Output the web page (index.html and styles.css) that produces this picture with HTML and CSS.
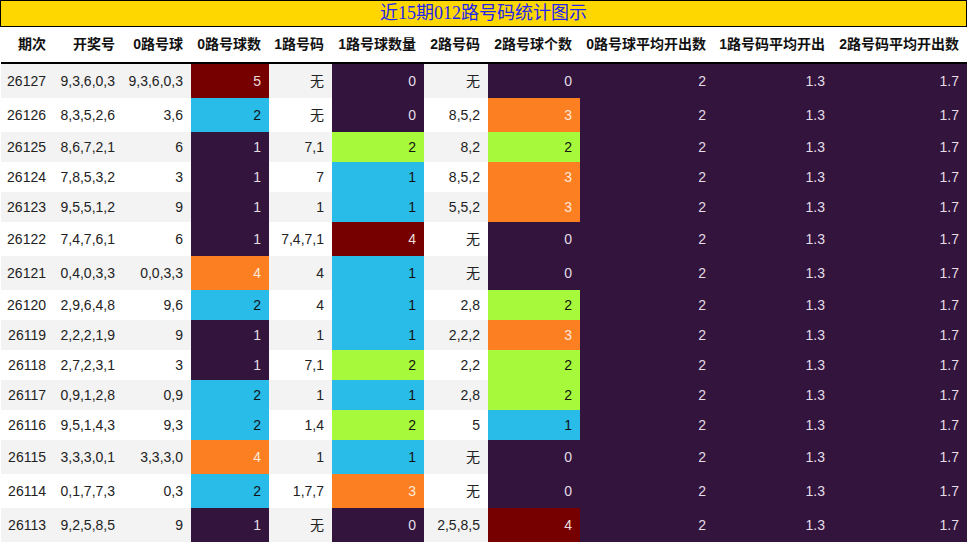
FILE: index.html
```html
<!DOCTYPE html>
<html>
<head>
<meta charset="utf-8">
<link rel="stylesheet" href="styles.css">
</head>
<body>
<div class="title">近15期012路号码统计图示</div>
<table class="stats">
<colgroup>
<col class="c1"><col class="c2"><col class="c3"><col class="c4"><col class="c5"><col class="c6"><col class="c7"><col class="c8"><col class="c9"><col class="c10"><col class="c11">
</colgroup>
<thead>
<tr><th>期次</th><th>开奖号</th><th>0路号球</th><th>0路号球数</th><th>1路号码</th><th>1路号球数量</th><th>2路号码</th><th>2路号球个数</th><th>0路号球平均开出数</th><th>1路号码平均开出</th><th>2路号码平均开出数</th></tr>
</thead>
<tbody>
<tr class="tall"><td>26127</td><td>9,3,6,0,3</td><td>9,3,6,0,3</td><td class="red">5</td><td>无</td><td class="pur">0</td><td>无</td><td class="pur">0</td><td class="pur">2</td><td class="pur">1.3</td><td class="pur">1.7</td></tr>
<tr class="tall"><td>26126</td><td>8,3,5,2,6</td><td>3,6</td><td class="cyan">2</td><td>无</td><td class="pur">0</td><td>8,5,2</td><td class="org">3</td><td class="pur">2</td><td class="pur">1.3</td><td class="pur">1.7</td></tr>
<tr><td>26125</td><td>8,6,7,2,1</td><td>6</td><td class="pur">1</td><td>7,1</td><td class="lime">2</td><td>8,2</td><td class="lime">2</td><td class="pur">2</td><td class="pur">1.3</td><td class="pur">1.7</td></tr>
<tr><td>26124</td><td>7,8,5,3,2</td><td>3</td><td class="pur">1</td><td>7</td><td class="cyan">1</td><td>8,5,2</td><td class="org">3</td><td class="pur">2</td><td class="pur">1.3</td><td class="pur">1.7</td></tr>
<tr><td>26123</td><td>9,5,5,1,2</td><td>9</td><td class="pur">1</td><td>1</td><td class="cyan">1</td><td>5,5,2</td><td class="org">3</td><td class="pur">2</td><td class="pur">1.3</td><td class="pur">1.7</td></tr>
<tr class="tall"><td>26122</td><td>7,4,7,6,1</td><td>6</td><td class="pur">1</td><td>7,4,7,1</td><td class="red">4</td><td>无</td><td class="pur">0</td><td class="pur">2</td><td class="pur">1.3</td><td class="pur">1.7</td></tr>
<tr class="tall"><td>26121</td><td>0,4,0,3,3</td><td>0,0,3,3</td><td class="org">4</td><td>4</td><td class="cyan">1</td><td>无</td><td class="pur">0</td><td class="pur">2</td><td class="pur">1.3</td><td class="pur">1.7</td></tr>
<tr><td>26120</td><td>2,9,6,4,8</td><td>9,6</td><td class="cyan">2</td><td>4</td><td class="cyan">1</td><td>2,8</td><td class="lime">2</td><td class="pur">2</td><td class="pur">1.3</td><td class="pur">1.7</td></tr>
<tr><td>26119</td><td>2,2,2,1,9</td><td>9</td><td class="pur">1</td><td>1</td><td class="cyan">1</td><td>2,2,2</td><td class="org">3</td><td class="pur">2</td><td class="pur">1.3</td><td class="pur">1.7</td></tr>
<tr><td>26118</td><td>2,7,2,3,1</td><td>3</td><td class="pur">1</td><td>7,1</td><td class="lime">2</td><td>2,2</td><td class="lime">2</td><td class="pur">2</td><td class="pur">1.3</td><td class="pur">1.7</td></tr>
<tr><td>26117</td><td>0,9,1,2,8</td><td>0,9</td><td class="cyan">2</td><td>1</td><td class="cyan">1</td><td>2,8</td><td class="lime">2</td><td class="pur">2</td><td class="pur">1.3</td><td class="pur">1.7</td></tr>
<tr><td>26116</td><td>9,5,1,4,3</td><td>9,3</td><td class="cyan">2</td><td>1,4</td><td class="lime">2</td><td>5</td><td class="cyan">1</td><td class="pur">2</td><td class="pur">1.3</td><td class="pur">1.7</td></tr>
<tr class="tall"><td>26115</td><td>3,3,3,0,1</td><td>3,3,3,0</td><td class="org">4</td><td>1</td><td class="cyan">1</td><td>无</td><td class="pur">0</td><td class="pur">2</td><td class="pur">1.3</td><td class="pur">1.7</td></tr>
<tr class="tall"><td>26114</td><td>0,1,7,7,3</td><td>0,3</td><td class="cyan">2</td><td>1,7,7</td><td class="org">3</td><td>无</td><td class="pur">0</td><td class="pur">2</td><td class="pur">1.3</td><td class="pur">1.7</td></tr>
<tr class="tall"><td>26113</td><td>9,2,5,8,5</td><td>9</td><td class="pur">1</td><td>无</td><td class="pur">0</td><td>2,5,8,5</td><td class="red">4</td><td class="pur">2</td><td class="pur">1.3</td><td class="pur">1.7</td></tr>
</tbody>
</table>
</body>
</html>
```
FILE: styles.css
```css
html, body {
  margin: 0;
  padding: 0;
  background: #ffffff;
}
body {
  font-family: "Liberation Sans", "Noto Sans CJK SC", sans-serif;
  font-size: 14px;
  color: #222222;
}
.title {
  box-sizing: border-box;
  width: 967px;
  height: 27px;
  border: 1px solid #000000;
  background: #ffd700;
  color: #2424f0;
  font-family: "Liberation Serif", "Noto Sans CJK SC", serif;
  font-size: 18px;
  line-height: 25px;
  text-align: center;
}
.stats {
  margin-left: 1px;
  width: 966px;
  table-layout: fixed;
  border-collapse: collapse;
  border-spacing: 0;
}
.c1 { width: 53px; }
.c2 { width: 69px; }
.c3 { width: 68px; }
.c4 { width: 78px; }
.c5 { width: 63px; }
.c6 { width: 92px; }
.c7 { width: 64px; }
.c8 { width: 92px; }
.c9 { width: 134px; }
.c10 { width: 119px; }
.c11 { width: 134px; }
.stats th {
  height: 36px;
  box-sizing: border-box;
  padding: 0 8px 0 0;
  font-weight: bold;
  line-height: 21px;
  text-align: right;
  white-space: nowrap;
  color: #111111;
  background: #ffffff;
  border-bottom: 2px solid #000000;
}
.stats td {
  padding: 7px 8px 7px 0;
  line-height: 16px;
  text-align: right;
  white-space: nowrap;
  border: 0;
}
.stats tr.tall td {
  padding-top: 9px;
  padding-bottom: 9px;
}
.stats tbody tr:nth-child(odd) {
  background: #f3f3f3;
}
.stats tbody tr:nth-child(even) {
  background: #ffffff;
}
.stats td.pur {
  background: #32143c;
  color: #e4dde6;
}
.stats td.red {
  background: #760000;
  color: #eedddd;
}
.stats td.cyan {
  background: #29bce9;
  color: #111111;
}
.stats td.org {
  background: #fc7f22;
  color: #fbe9dc;
}
.stats td.lime {
  background: #a6fa3b;
  color: #111111;
}
```
